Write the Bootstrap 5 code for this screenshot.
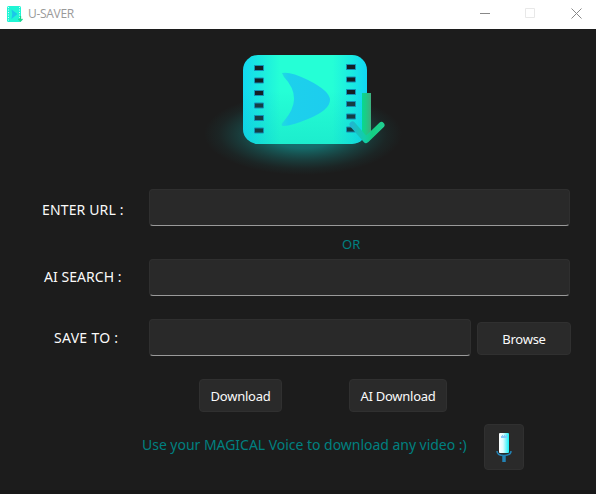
<!DOCTYPE html>
<html lang="en">
<head>
<meta charset="utf-8">
<meta name="viewport" content="width=device-width, initial-scale=1">
<title>U-SAVER</title>
<link href="https://cdn.jsdelivr.net/npm/bootstrap@5.3.0/dist/css/bootstrap.min.css" rel="stylesheet">
<style>
body{background:#1c1c1c;color:#fafafa;font-family:"Noto Sans","Open Sans",sans-serif;font-size:14px;line-height:20px;height:494px;overflow:hidden}
.titlebar{height:29px;color:#999;font-size:12px;padding:0 14px 2px 6px}
.titlebar .caption{font-family:"Open Sans",sans-serif;letter-spacing:-.3px;line-height:18px;margin-left:5px}
.winbtns{gap:35px}
.hero{height:160px}
.field-row{height:37px}
.lbl{width:149px;padding:5px 0 0 42px;white-space:pre;letter-spacing:.15px}
.lbl-ai{padding:0 0 1px 44px;letter-spacing:.05px}
.lbl-save{padding:1px 0 0 54px;letter-spacing:.3px}
.entry{height:37px;background:#292929;border:1px solid #2f2f2f;border-bottom-color:#9a9a9a;border-radius:4px;padding:4px 10px;color:#fafafa}
.entry:focus{background:#292929;color:#fafafa;box-shadow:none;border-color:#2f2f2f;border-bottom-color:#57c8ff}
.wide{width:421px}
.narrow{width:322px}
.btn-dark2{height:33px;background:#2a2a2a;border:1px solid #303030;border-radius:4px;color:#fafafa;font-size:13px;line-height:20px;padding:0;letter-spacing:-.25px}
.btn-dark2:hover{background:#323232;color:#fff}
.browse{width:94px;margin:2px 0 0 6px;padding-top:1px}
.or{height:33px;color:#008080;font-size:13px;padding:3px 0 0 342px;line-height:30px}
.save-row{margin-top:23px}
.actions{margin:23px 0 0 199px;gap:67px}
.dl{width:83px}.ai-dl{width:98px}
.voice{margin:12px 0 0 142px;height:46px;color:#008080}
.voice-text{width:342px;white-space:nowrap;padding-bottom:4px;letter-spacing:-.03px}
.mic{width:40px;height:46px;padding-top:1px}
.base{height:4px;background:#171718}
</style>
<script src="https://cdn.jsdelivr.net/npm/bootstrap@5.3.0/dist/js/bootstrap.bundle.min.js"></script>
</head>
<body class="d-flex flex-column">
<header class="titlebar bg-white d-flex align-items-center justify-content-between flex-shrink-0">
  <div class="d-flex align-items-center">
    <svg width="17" height="18" viewBox="0 0 17 18"><rect x="1" y="1" width="14" height="16" rx="1.5" fill="#20f5d5"/><path d="M2.5 2v14M13.5 2v14" stroke="#d5fff5" stroke-dasharray="1 1.5"/><path d="M5.5 4.5 11.500 9l-6 5q1.500-5 0-9.500z" fill="#1cc7ea"/><path d="M14.500 11v4m-2-1 2 2 2-2" stroke="#18d68e" stroke-width="1.300" fill="none"/></svg>
    <span class="caption">U-SAVER</span>
  </div>
  <div class="winbtns d-flex align-items-center">
    <svg width="11" height="11"><path d="M1 5.500h10" stroke="#888"/></svg>
    <svg width="11" height="11"><path d="M.5.5h9v9h-9z" stroke="#e8e8e8" fill="none"/></svg>
    <svg width="11" height="11"><path d="m.5.5 10 10m0-10-10 10" stroke="#888" fill="none"/></svg>
  </div>
</header>
<main class="flex-grow-1">
  <div class="hero">
    <svg class="d-block" width="596" height="160" viewBox="0 29 596 160">
      <defs>
        <linearGradient id="film"><stop offset="0" stop-color="#12d8f1"/><stop offset=".13" stop-color="#1ae8e1"/><stop offset=".3" stop-color="#25ffd6"/><stop offset=".72" stop-color="#25ffd6"/><stop offset=".88" stop-color="#1aeae2"/><stop offset="1" stop-color="#0fd6f4"/></linearGradient>
        <linearGradient id="shade" x2="0" y2="1"><stop offset=".4" stop-color="#06b5b5" stop-opacity="0"/><stop offset="1" stop-color="#06c0b8" stop-opacity=".28"/></linearGradient>
        <linearGradient id="stem"><stop offset="0" stop-color="#05da91"/><stop offset=".45" stop-color="#1dca86"/><stop offset="1" stop-color="#3fae7e"/></linearGradient>
        <linearGradient id="head" gradientUnits="userSpaceOnUse" x1="351" y1="125" x2="384" y2="125"><stop offset="0" stop-color="#21b6d2"/><stop offset=".4" stop-color="#12cda9"/><stop offset=".65" stop-color="#14cf82"/><stop offset="1" stop-color="#20ce91"/></linearGradient>
        <linearGradient id="play"><stop offset="0" stop-color="#20dce0"/><stop offset=".15" stop-color="#1dd0ec"/><stop offset="1" stop-color="#1dcdee"/></linearGradient>
        <radialGradient id="glow"><stop offset="0" stop-color="#14807d"/><stop offset=".35" stop-color="#147876" stop-opacity=".85"/><stop offset=".65" stop-color="#166765" stop-opacity=".42"/><stop offset=".85" stop-color="#17605e" stop-opacity=".13"/><stop offset="1" stop-color="#17605e" stop-opacity="0"/></radialGradient>
      </defs>
      <ellipse cx="303" cy="134" rx="99" ry="41" fill="url(#glow)"/>
      <rect x="243" y="55" width="124" height="89" rx="15" fill="url(#film)"/>
      <rect x="243" y="55" width="124" height="89" rx="15" fill="url(#shade)"/>
      <g stroke="#158fb5" stroke-width="1">
        <g fill="#151f24"><path d="M254.500 65.500h9v5h-9zM254.500 78h9v5h-9zM254.500 90.500h9v5h-9z"/><path d="M346.500 64.500h9v5h-9zM346.500 77h9v5h-9zM346.500 89.500h9v5h-9z"/></g>
        <g fill="#163d43"><path d="M254.500 103h9v5h-9zM254.500 115.500h9v5h-9zM254.500 128h9v5h-9z"/><path d="M346.500 101.500h9v5h-9zM346.500 114h9v5h-9zM346.500 127h9v5h-9z"/></g>
      </g>
      <path d="M282 73Q290 71 308 80Q330 91 330 100Q330 110 308 119Q291 126 284 126Q279 126 284 121Q304 98 284 77Z" fill="url(#play)"/>
      <path d="M362 93h9v44l-5 4-4-4z" fill="url(#stem)"/>
      <path d="m352.500 124.500 13.500 15.500 15.500-15" fill="none" stroke="url(#head)" stroke-width="6" stroke-linecap="round" stroke-linejoin="round"/>
    </svg>
  </div>
  <div class="field-row d-flex align-items-center"><label class="lbl" for="url">ENTER URL :</label><input id="url" class="form-control entry wide" type="text"></div>
  <div class="or">OR</div>
  <div class="field-row d-flex align-items-center"><label class="lbl lbl-ai" for="search">AI SEARCH :</label><input id="search" class="form-control entry wide" type="text"></div>
  <div class="field-row save-row d-flex align-items-center"><label class="lbl lbl-save" for="path">SAVE TO :</label><input id="path" class="form-control entry narrow" type="text"><button class="btn btn-dark2 browse" type="button">Browse</button></div>
  <div class="actions d-flex"><button class="btn btn-dark2 dl" type="button">Download</button><button class="btn btn-dark2 ai-dl" type="button">AI Download</button></div>
  <div class="voice d-flex align-items-center">
    <div class="voice-text">Use your MAGICAL Voice to download any video :)</div>
    <button class="btn btn-dark2 mic d-flex align-items-center justify-content-center" type="button" aria-label="Voice">
      <svg width="16" height="30" viewBox="0 0 16 30"><defs><linearGradient id="mg"><stop offset="0" stop-color="#fff"/><stop offset=".4" stop-color="#dffcff"/><stop offset="1" stop-color="#12eff7"/></linearGradient></defs><path d="M1 18q0 4.500 7 4.500t7-4.500" fill="none" stroke="#2382b4" stroke-width="1.500"/><path d="M8 22v7" stroke="#2382b4" stroke-width="3.500"/><rect x="3" y="0" width="10" height="20" rx="1" fill="url(#mg)"/><path d="M5 5V3h1v-1h1v1h1v-1h1v1h1v-1h1v3z" fill="#83c9fa"/></svg>
    </button>
  </div>
</main>
<div class="base flex-shrink-0"></div>
</body>
</html>
